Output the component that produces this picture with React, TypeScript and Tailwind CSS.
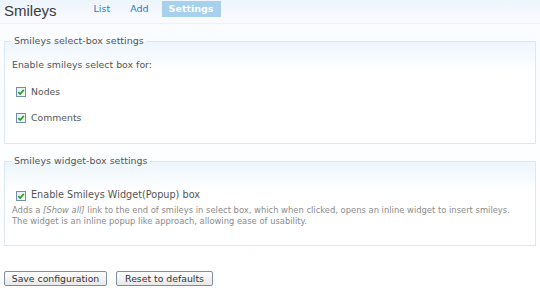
import React from "react"

const font = { fontFamily: '"DejaVu Sans", Verdana, sans-serif' }

function Check({ label, big = false }: { label: string; big?: boolean }) {
  return (
    <label className="flex h-[11px] items-center gap-[5px]">
      <span className="flex h-[10px] w-[10px] items-center justify-center border border-[#6f8fb0] bg-gradient-to-br from-[#e6ecf2] to-white">
        <svg width="8" height="8" viewBox="0 0 8 8">
          <path d="M1.2 4.2 L3.2 6 L6.8 1.8" fill="none" stroke="#2aa52a" strokeWidth="1.8" />
        </svg>
      </span>
      <span className={big ? "text-[9.7px] text-[#555]" : "text-[9.3px] text-[#555]"}>{label}</span>
    </label>
  )
}

function Fieldset({ legend, children, className = "" }: { legend: string; children: React.ReactNode; className?: string }) {
  return (
    <fieldset className={`mx-[4px] border border-[#dbe7f1] bg-gradient-to-b from-[#edf5fc] from-0% to-white to-[30px] px-[7px] ${className}`}>
      <legend className="px-[2px] text-[9.5px] leading-[12px] text-[#555]">{legend}</legend>
      {children}
    </fieldset>
  )
}

export default function App() {
  return (
    <div className="h-[295px] w-[540px] overflow-hidden bg-white" style={font}>
      <div className="flex h-[24px] items-start border-b border-[#eef1f6] bg-gradient-to-b from-[#edf5fc] to-[#fbfbff] pl-[4px]">
        <h2 className="mt-[2px] text-[15px] leading-[18px] text-[#3b3b3b]" style={{ fontFamily: '"Liberation Sans", Arial, sans-serif' }}>
          Smileys
        </h2>
        <div className="ml-[37px] mt-[1px] flex items-center text-[9.5px]">
          <a className="mr-[20px] text-[#1d7dc3]">List</a>
          <a className="mr-[13px] text-[#1d7dc3]">Add</a>
          <a className="flex h-[16px] w-[59px] items-center justify-center bg-[#a6d0ec] font-bold text-white">Settings</a>
        </div>
      </div>
      <div className="bg-gradient-to-b from-[#fafcff] to-white pt-[11px]">
        <Fieldset legend="Smileys select-box settings" className="h-[109px]">
          <p className="mt-[12px] text-[9.4px] leading-[12px] text-[#555]">Enable smileys select box for:</p>
          <div className="ml-[4px] mt-[15px] flex flex-col gap-[15px]">
            <Check label="Nodes" />
            <Check label="Comments" />
          </div>
        </Fieldset>
        <Fieldset legend="Smileys widget-box settings" className="mt-[11px] h-[91px]">
          <div className="ml-[4px] mt-[23px]">
            <Check label="Enable Smileys Widget(Popup) box" big />
          </div>
          <p className="mt-[4px] text-[8.4px] leading-[11px] text-[#8a8a8a]">
            Adds a <em>[Show all]</em> link to the end of smileys in select box, which when clicked, opens an inline widget to insert smileys.
            <br />
            The widget is an inline popup like approach, allowing ease of usability.
          </p>
        </Fieldset>
        <div className="mt-[25px] flex gap-[9px] pl-[4px]">
          <button className="h-[15px] w-[103px] rounded-[2px] border border-[#7d8fa3] bg-gradient-to-b from-white to-[#e8e8e8] text-[9.3px] leading-[12px] text-[#333]">Save configuration</button>
          <button className="h-[15px] w-[97px] rounded-[2px] border border-[#7d8fa3] bg-gradient-to-b from-white to-[#e8e8e8] text-[9.3px] leading-[12px] text-[#333]">Reset to defaults</button>
        </div>
      </div>
    </div>
  )
}
